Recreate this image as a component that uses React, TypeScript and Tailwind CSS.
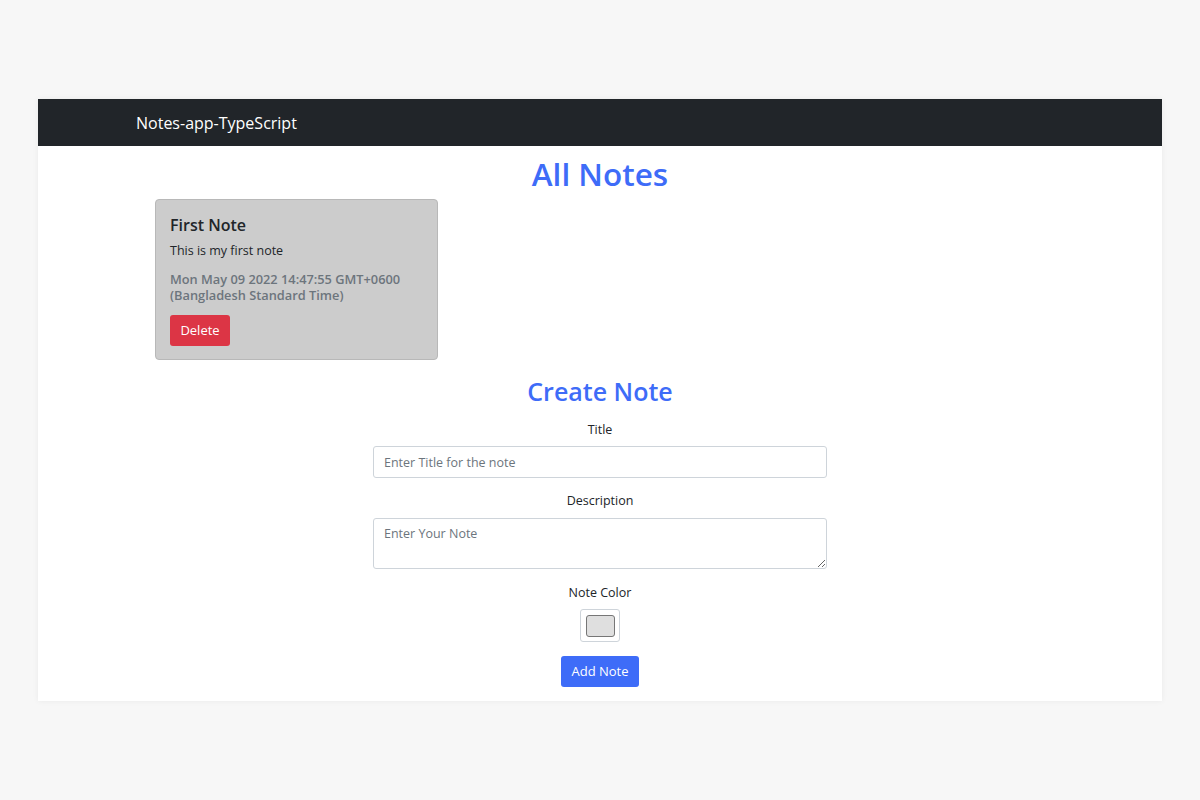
import React, { useState } from 'react';

type Note = {
  id: string;
  title: string;
  text: string;
  color: string;
  date: string;
};

const initialNotes: Note[] = [
  {
    id: '1',
    title: 'First Note',
    text: 'This is my first note',
    color: '#cccccc',
    date: 'Mon May 09 2022 14:47:55 GMT+0600 (Bangladesh Standard Time)',
  },
];

export default function App() {
  const [notes, setNotes] = useState<Note[]>(initialNotes);

  return (
    <div className="min-h-[800px] bg-[#f7f7f7] pt-[99px] font-['Open_Sans',sans-serif]">
      <div className="mx-[38px] h-[602px] bg-white shadow-[0_0_6px_rgba(0,0,0,0.06)]">
        {/* Navbar */}
        <div className="flex h-[47px] items-center bg-[#212529] pl-[98px]">
          <span className="text-[16px] text-white">Notes-app-TypeScript</span>
        </div>

        {/* Notes list */}
        <h1 className="mt-[8px] text-center text-[31.5px] font-semibold leading-[40px] text-[#3e6cf8]">All Notes</h1>
        <div className="mt-[5px] flex gap-4 pl-[117px]">
          {notes.map(note => (
            <div
              key={note.id}
              className="h-[161px] w-[283px] rounded-[4px] border border-[#b8b8b8] px-[14px] pt-[14px]"
              style={{ backgroundColor: note.color }}
            >
              <h5 className="text-[16px] font-semibold leading-[22px] text-[#212529]">{note.title}</h5>
              <p className="mt-[6px] text-[12.5px] leading-[18px] text-[#212529]">{note.text}</p>
              <p className="mt-[11px] text-[12.8px] font-semibold leading-[16px] text-[#6c757d]">{note.date}</p>
              <button
                className="mt-[12px] h-[31px] w-[60px] rounded-[3px] bg-[#dc3545] text-[13px] text-white"
                onClick={() => setNotes(notes.filter(n => n.id !== note.id))}
              >
                Delete
              </button>
            </div>
          ))}
        </div>

        {/* Create form */}
        <h2 className="mt-[14px] text-center text-[25px] font-semibold leading-[34px] text-[#3e6cf8]">Create Note</h2>
        <div className="mx-auto mt-[13px] flex w-[454px] flex-col items-center">
          <label className="text-[12.5px] leading-[18px] text-[#212529]">Title</label>
          <input
            className="mt-[7px] h-[32px] w-full rounded-[3px] border border-[#ced4da] px-[10px] text-[12.5px] outline-none placeholder:text-[#6c757d]"
            placeholder="Enter Title for the note"
          />
          <label className="mt-[14px] text-[12.5px] leading-[18px] text-[#212529]">Description</label>
          <textarea
            className="mt-[8px] h-[51px] w-full rounded-[3px] border border-[#ced4da] px-[10px] py-[6px] text-[12.5px] outline-none placeholder:text-[#6c757d]"
            placeholder="Enter Your Note"
          />
          <label className="mt-[15px] text-[12.5px] leading-[18px] text-[#212529]">Note Color</label>
          <div className="mt-[7px] flex h-[33px] w-[40px] items-center justify-center rounded-[3px] border border-[#ced4da] bg-white">
            <div className="h-[22px] w-[29px] rounded-[3px] border border-[#767676] bg-[#dfdfdf]" />
          </div>
          <button className="mt-[14px] h-[31px] w-[78px] rounded-[3px] bg-[#3e6cf8] text-[13px] text-white">Add Note</button>
        </div>
      </div>
    </div>
  );
}
